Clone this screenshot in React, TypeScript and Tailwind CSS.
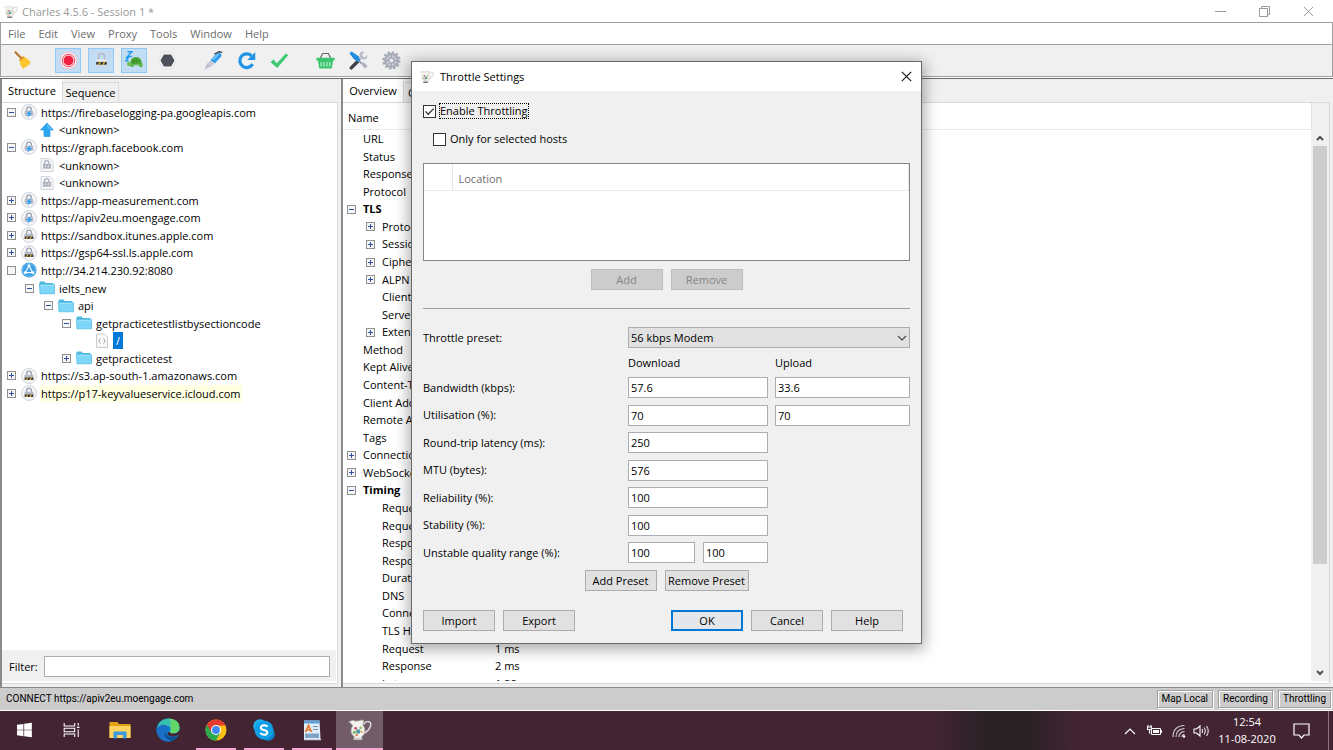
import { useState } from "react"
import type { ReactNode } from "react"
import clsx from "clsx"

const menus = ["File", "Edit", "View", "Proxy", "Tools", "Window", "Help"]

type TreeIcon = "bolt" | "lock" | "globe" | "up" | "doc" | "json" | "folder"

interface TreeRow {
  label: string
  depth: number
  icon: TreeIcon
  toggle?: "+" | "-" | "blank"
  selected?: boolean
  highlight?: boolean
}

const tree: TreeRow[] = [
  { label: "https://firebaselogging-pa.googleapis.com", depth: 0, icon: "bolt", toggle: "-" },
  { label: "<unknown>", depth: 1, icon: "up" },
  { label: "https://graph.facebook.com", depth: 0, icon: "bolt", toggle: "-" },
  { label: "<unknown>", depth: 1, icon: "doc" },
  { label: "<unknown>", depth: 1, icon: "doc" },
  { label: "https://app-measurement.com", depth: 0, icon: "bolt", toggle: "+" },
  { label: "https://apiv2eu.moengage.com", depth: 0, icon: "bolt", toggle: "+" },
  { label: "https://sandbox.itunes.apple.com", depth: 0, icon: "lock", toggle: "+" },
  { label: "https://gsp64-ssl.ls.apple.com", depth: 0, icon: "lock", toggle: "+" },
  { label: "http://34.214.230.92:8080", depth: 0, icon: "globe", toggle: "blank" },
  { label: "ielts_new", depth: 1, icon: "folder", toggle: "-" },
  { label: "api", depth: 2, icon: "folder", toggle: "-" },
  { label: "getpracticetestlistbysectioncode", depth: 3, icon: "folder", toggle: "-" },
  { label: "/", depth: 4, icon: "json", selected: true },
  { label: "getpracticetest", depth: 3, icon: "folder", toggle: "+" },
  { label: "https://s3.ap-south-1.amazonaws.com", depth: 0, icon: "lock", toggle: "+" },
  { label: "https://p17-keyvalueservice.icloud.com", depth: 0, icon: "lock", toggle: "+", highlight: true },
]

const indents = ["pl-1", "pl-[22px]", "pl-[41px]", "pl-[59px]", "pl-[77px]"]

interface DetailRow {
  name: string
  level: number
  toggle?: "+" | "-"
  bold?: boolean
  value?: string
}

const details: DetailRow[] = [
  { name: "URL", level: 0 },
  { name: "Status", level: 0 },
  { name: "Response Code", level: 0 },
  { name: "Protocol", level: 0 },
  { name: "TLS", level: 0, toggle: "-", bold: true },
  { name: "Protocol", level: 1, toggle: "+" },
  { name: "Session Resumed", level: 1, toggle: "+" },
  { name: "Cipher Suite", level: 1, toggle: "+" },
  { name: "ALPN", level: 1, toggle: "+" },
  { name: "Client Certificates", level: 1 },
  { name: "Server Certificates", level: 1 },
  { name: "Extensions", level: 1, toggle: "+" },
  { name: "Method", level: 0 },
  { name: "Kept Alive", level: 0 },
  { name: "Content-Type", level: 0 },
  { name: "Client Address", level: 0 },
  { name: "Remote Address", level: 0 },
  { name: "Tags", level: 0 },
  { name: "Connection", level: 0, toggle: "+" },
  { name: "WebSockets", level: 0, toggle: "+" },
  { name: "Timing", level: 0, toggle: "-", bold: true },
  { name: "Request Start Time", level: 1 },
  { name: "Request End Time", level: 1 },
  { name: "Response Start Time", level: 1 },
  { name: "Response End Time", level: 1 },
  { name: "Duration", level: 1 },
  { name: "DNS", level: 1 },
  { name: "Connect", level: 1 },
  { name: "TLS Handshake", level: 1 },
  { name: "Request", level: 1, value: "1 ms" },
  { name: "Response", level: 1, value: "2 ms" },
  { name: "Latency", level: 1, value: "1.38 s" },
]

const fields = [
  { id: "bandwidth", label: "Bandwidth (kbps):", down: "57.6", up: "33.6" },
  { id: "utilisation", label: "Utilisation (%):", down: "70", up: "70" },
  { id: "latency", label: "Round-trip latency (ms):", down: "250" },
  { id: "mtu", label: "MTU (bytes):", down: "576" },
  { id: "reliability", label: "Reliability (%):", down: "100" },
  { id: "stability", label: "Stability (%):", down: "100" },
]

function Expander({ state }: { state: "+" | "-" | "blank" }) {
  return (
    <svg width="9" height="9" viewBox="0 0 9 9" className="shrink-0">
      <rect x="0.5" y="0.5" width="8" height="8" fill="#f6f6f6" stroke="#8f8f8f" />
      {state !== "blank" && <path d="M2 4.5h5" stroke="#2f4f9f" />}
      {state === "+" && <path d="M4.5 2v5" stroke="#2f4f9f" />}
    </svg>
  )
}

function NodeIcon({ icon }: { icon: TreeIcon }) {
  if (icon === "bolt" || icon === "lock") {
    return (
      <svg width="16" height="16" viewBox="0 0 16 16" className="shrink-0">
        <circle cx="8" cy="8" r="7.4" fill="#f6f7f9" stroke="#cfd2da" />
        <path d="M5.6 7.4V5.6a2.4 2.4 0 0 1 4.8 0v1.800" fill="none" stroke="#9da2b0" strokeWidth="1.3" />
        {icon === "bolt" ? (
          <>
            <rect x="3.6" y="6.800" width="8.800" height="5.200" rx="1" fill="#b9bdca" />
            <path d="M9.600 6 5 10h2.400l-1.200 3.800L11.400 9H8.800z" fill="#2ea3f2" />
          </>
        ) : (
          <>
            <rect x="3.600" y="6.800" width="8.800" height="2.800" fill="#b4b9c7" />
            <rect x="3.600" y="9.400" width="8.800" height="2.600" fill="#3b3b3b" />
            <path d="m4.800 12 1.400-2.600h1.200L6 12zM8.400 12l1.400-2.600H11L9.600 12z" fill="#e8c22e" />
          </>
        )}
      </svg>
    )
  }
  if (icon === "globe") {
    return (
      <svg width="16" height="16" viewBox="0 0 16 16" className="shrink-0">
        <circle cx="8" cy="8" r="7.6" fill="#3b9fe3" />
        <circle cx="8" cy="8" r="6.4" fill="none" stroke="#8ccaf3" strokeWidth="0.7" />
        <path d="M8 3.6 4.3 10.6h7.4z" fill="none" stroke="#e9f6ff" strokeWidth="1.2" />
        <circle cx="8" cy="3.8" r="1.4" fill="#fff" />
        <circle cx="4.2" cy="10.6" r="1.4" fill="#fff" />
        <circle cx="11.8" cy="10.6" r="1.4" fill="#fff" />
      </svg>
    )
  }
  if (icon === "up") {
    return (
      <svg width="16" height="16" viewBox="0 0 14 16" className="shrink-0">
        <path d="m7 1 6.5 7H10v6.5H4V8H.5z" fill="#2ba6ef" stroke="#1f8fdd" strokeWidth="0.6" />
        <path d="m7 2 5 5.4H9.4L7 4.6z" fill="#55c4fa" />
      </svg>
    )
  }
  if (icon === "doc") {
    return (
      <svg width="16" height="16" viewBox="0 0 14 16" className="shrink-0">
        <path d="M1 1.5h9l3 3v10H1z" fill="#f4f5f7" stroke="#d4d6dc" />
        <path d="M4.6 7V5.8a2.1 2.1 0 0 1 4.2 0V7" fill="none" stroke="#a9adb9" strokeWidth="1.2" />
        <path d="M3 6.800h8v4.800H3z" fill="#a6abb8" />
        <path d="M3 9.2h8M5.600 7v4.400M8.400 7v4.400" stroke="#cfd2da" strokeWidth="0.8" />
      </svg>
    )
  }
  if (icon === "json") {
    return (
      <svg width="16" height="16" viewBox="0 0 14 16" className="shrink-0">
        <path d="M1.5 1h8l3 3v10.5h-11z" fill="#fafafa" stroke="#c9c9ce" />
        <path d="M5.6 5.4Q4.6 5.4 4.6 7t-1 1q1 0 1 1.2t1 1.4M8.4 5.4q1 0 1 1.6t1 1q-1 0-1 1.2t-1 1.4" fill="none" stroke="#a2a2aa" strokeWidth="0.8" />
      </svg>
    )
  }
  return (
    <svg width="16" height="16" viewBox="0 0 16 16" className="shrink-0">
      <path d="M.4 3q0-1.600 1.200-1.600h3.800L6.800 3h7.600v3h-14z" fill="#4db8e0" />
      <path d="M.5 4.600h15v9.200H1z" fill="#7ed6f8" stroke="#4db8e0" strokeWidth="0.7" />
      <path d="M1.200 5.300h13.600" stroke="#b5eafd" strokeWidth="0.8" />
    </svg>
  )
}

function Jug({ size, faded }: { size: number; faded?: boolean }) {
  return (
    <svg width={size} height={size} viewBox="0 0 22 22" className={clsx("shrink-0", faded && "opacity-90")}>
      <path d="M14.400 6q1-3 4.600-2.600 2.600.6 1.600 4-1.400 4.400-6 6.600" fill="none" stroke={faded ? "#c4c4c4" : "#e2dfdc"} strokeWidth="1.3" />
      <path
        d="M1 3.400 4.400 2.200 7 3l3.600-.4 2.400-.8 1.400.8-.8 4q2.200 2.400 1.800 5.800-.6 3.400-3 4.800l.6 2.400H5.200l.6-2.400Q3 15.400 2.800 12q0-3 1.800-5Q3 5.400 1 3.400z"
        fill="#f4f3ef"
        stroke="#b5b5b0"
        strokeWidth="0.800"
      />
      <circle cx="7" cy="9.400" r="1.400" fill="#c85b72" />
      <circle cx="9.400" cy="12.400" r="2" fill="#4f9aa8" />
      <circle cx="5.800" cy="13" r="1.400" fill="#7cb65b" />
      <circle cx="11.600" cy="9" r="1.300" fill="#8fc46c" />
      <circle cx="8" cy="15.600" r="1.100" fill="#d77b4a" />
      <circle cx="12.600" cy="12.600" r="1" fill="#e0a040" />
      <path d="M5.400 19.200h7" stroke={faded ? "#5a5a5a" : "#c9c6c2"} strokeWidth="2" />
    </svg>
  )
}

const toolIcons: Record<string, ReactNode> = {
  Clear: (
    <>
      <path d="M2.6 1.4 9 8" stroke="#b8742a" strokeWidth="2.2" strokeLinecap="round" />
      <path d="M7 8.600 11 5.600q5 2.400 8 6.800l-1.800.8-.2 1.800-2 .2-.8 1.800-1.800-.2-1 2.400Q6.600 15 7 8.600z" fill="#fbc62f" />
      <path d="m6.6 8.8 4.2-3.2 1 1.2-4.4 3.6z" fill="#e48d20" />
    </>
  ),
  Record: (
    <>
      <circle cx="10" cy="10" r="8.8" fill="#fdf2f4" stroke="#f1b8c1" strokeWidth="0.8" />
      <circle cx="10" cy="10" r="6.600" fill="#fff" stroke="#e8384f" strokeWidth="1" />
      <circle cx="10" cy="10" r="5.200" fill="#ee1f3f" />
    </>
  ),
  "SSL Proxying": (
    <>
      <path d="M6.8 9.4V6a3.2 3.2 0 0 1 6.4 0v3.4" fill="none" stroke="#b9bec9" strokeWidth="2" />
      <rect x="4.4" y="9" width="11.2" height="7" fill="#eeeef0" />
      <rect x="4.4" y="11.4" width="11.2" height="3" fill="#34373c" />
      <path d="m6 14.4 2-3h1.6l-2 3zM10.6 14.4l2-3h1.6l-2 3z" fill="#eac231" />
      <path d="M4.4 15.6h11.2" stroke="#c9ccd3" />
    </>
  ),
  Throttle: (
    <>
      <path d="M2.600.8h4.600L2.800 5.600h4.600M.6 7h3L.8 10.400h3" fill="none" stroke="#1b9de8" strokeWidth="1.400" />
      <path d="M5.400 14Q6 6.400 11.600 6.400T18 14z" fill="#4aa636" />
      <path d="M8.6 13 9.8 8m3 5-.6-5M6.6 10.6h10.2" stroke="#378a27" strokeWidth="0.8" />
      <circle cx="4.400" cy="13.600" r="2.400" fill="#6fc253" />
      <path d="M5 14h14l-1 2.800h-2.600L14.400 15H9.600l-.8 1.800H6.4z" fill="#58b340" />
    </>
  ),
  Breakpoints: (
    <>
      <path d="M5.4 1.4h9.2l5 8.600-5 8.600H5.4L.4 10z" fill="#f9f9fa" stroke="#dadbde" strokeWidth="0.8" />
      <path d="M6.200 3.600h7.600l3.600 6.400-3.600 6.400H6.200L2.600 10z" fill="#4d5159" />
    </>
  ),
  Compose: (
    <>
      <path d="m.6 19.400 2.800-6.400L7.400 16z" fill="#b5bac6" />
      <path d="M3.2 13.6 8 8.2l4 3.6L6.8 17z" fill="#c7cbd6" />
      <path d="m7 9.4 7-7.2q3.6-1.6 4.6 3l-7 7.6z" fill="#2b9cee" />
      <path d="M10.600 3.400 16 .8l3 .6" fill="none" stroke="#35383f" strokeWidth="1.4" />
      <path d="m9.4 9.2 6-6" stroke="#8fd2fb" strokeWidth="1.2" />
    </>
  ),
  Repeat: (
    <>
      <path d="M16.400 13.800A7.200 7.200 0 1 1 15.200 5" fill="none" stroke="#2294e8" strokeWidth="3.4" />
      <path d="M19.200 1v8.400h-8.400z" fill="#2294e8" />
    </>
  ),
  Validate: <path d="m.6 11.800 3-2.800 3.600 3.800L16.600 2.600l2.600 2L7.600 18z" fill="#40c973" />,
  Basket: (
    <>
      <path d="M4.4 8 7 2.600h6L15.600 8" fill="none" stroke="#62666e" strokeWidth="1.2" />
      <path d="M.4 7.200h19.200v2.800h-1.600L16.600 18.400H3.400L2 10H.4z" fill="#3cc56f" />
      <path d="M5.4 11.6v4.6M8.4 11.6v4.6M11.6 11.6v4.6M14.6 11.6v4.6" stroke="#c9f3d8" strokeWidth="1.1" />
    </>
  ),
  Tools: (
    <>
      <path d="m2.400 17.800 7-7" stroke="#3f434b" strokeWidth="3.6" strokeLinecap="round" />
      <path d="m9 10.8 5-5" stroke="#c3c7d1" strokeWidth="2.6" />
      <path d="M19.200 4.2 16.200 6.800 13.600 4.400 16.200.8q-5-1.400-5.200 4 1.200 5 5.200 4 3.600-.8 3-4.600z" fill="#b9bdc8" />
      <path d="m.4 2.400 2.400-2L10 5.600l2 4.200-2.400 1.800L5 8.400z" fill="#218de0" />
      <path d="m10.4 10.4 3 3" stroke="#8a8f9b" strokeWidth="1.6" />
      <path d="m12.600 13.400 4.200 5 2.800-2.600-4.600-4.200z" fill="#adb1bd" />
    </>
  ),
  Settings: (
    <>
      <circle cx="10" cy="10" r="8.6" fill="none" stroke="#a4a8b4" strokeWidth="2" strokeDasharray="2.7 1.8" />
      <circle cx="10" cy="10" r="6.8" fill="#c6c9d3" stroke="#a4a8b4" strokeWidth="2" />
      <path d="M10 4v12M4 10h12M5.8 5.8l8.4 8.4M14.2 5.8l-8.4 8.4" stroke="#9599a6" strokeWidth="0.9" />
      <circle cx="10" cy="10" r="2.6" fill="#eeeeef" stroke="#9599a6" />
    </>
  ),
}

const toolGroups = [
  [{ name: "Clear" }],
  [
    { name: "Record", on: true },
    { name: "SSL Proxying", on: true },
    { name: "Throttle", on: true },
    { name: "Breakpoints" },
  ],
  [{ name: "Compose" }, { name: "Repeat" }, { name: "Validate" }],
  [{ name: "Basket" }, { name: "Tools" }, { name: "Settings" }],
]

function PushButton({ children, className, disabled }: { children: ReactNode; className?: string; disabled?: boolean }) {
  return (
    <button
      type="button"
      disabled={disabled}
      className={clsx(
        "h-[21px] border text-center leading-4",
        disabled ? "border-[#bfbfbf] bg-[#cccccc] text-[#858585]" : "border-[#adadad] bg-[#e1e1e1] text-black",
        className ?? "w-[72px]",
      )}
    >
      {children}
    </button>
  )
}

function TextField({ id, label, value, className }: { id: string; label: string; value: string; className: string }) {
  return (
    <input
      id={id}
      aria-label={label}
      defaultValue={value}
      className={clsx("h-[21px] border border-[#abadb3] bg-white px-[2px] leading-4 outline-none", className)}
    />
  )
}

function CheckBox({ id, checked, onChange }: { id: string; checked: boolean; onChange: (v: boolean) => void }) {
  return (
    <span className="relative flex h-[13px] w-[13px]">
      <input
        id={id}
        type="checkbox"
        checked={checked}
        onChange={(e) => onChange(e.target.checked)}
        className="h-[13px] w-[13px] appearance-none border border-[#333333] bg-white"
      />
      {checked && (
        <svg viewBox="0 0 13 13" className="pointer-events-none absolute inset-0">
          <path d="m2.4 6.4 2.8 2.8 5.4-5.6" fill="none" stroke="#333" strokeWidth="1.3" />
        </svg>
      )}
    </span>
  )
}

function ThrottleDialog() {
  const [enabled, setEnabled] = useState(true)
  const [selectedOnly, setSelectedOnly] = useState(false)

  return (
    <section
      role="dialog"
      aria-label="Throttle Settings"
      className="absolute inset-x-0 top-[61px] z-20 mx-auto w-[511px] border border-[#6b6b6b] bg-[#f0f0f0] shadow-[0_3px_14px_2px_rgba(0,0,0,0.35)]"
    >
      <header className="flex h-[29px] items-center bg-white pl-2 pr-[9px]">
        <Jug size={14} faded />
        <h2 className="flex-1 pl-[6px]">Throttle Settings</h2>
        <button type="button" aria-label="Close">
          <svg width="11" height="11" viewBox="0 0 11 11">
            <path d="m.8.8 9.4 9.4M10.2.8.8 10.2" stroke="#111" strokeWidth="1.1" />
          </svg>
        </button>
      </header>

      <div className="px-[11px] pb-3 pt-3">
        <div className="flex h-4 items-center gap-[3px]">
          <CheckBox id="enable" checked={enabled} onChange={setEnabled} />
          <label htmlFor="enable" className="border border-dotted border-black leading-[14px]">
            Enable Throttling
          </label>
        </div>
        <div className="mt-3 flex h-4 items-center gap-1 pl-[10px]">
          <CheckBox id="hosts" checked={selectedOnly} onChange={setSelectedOnly} />
          <label htmlFor="hosts">Only for selected hosts</label>
        </div>

        <div className="mt-4 h-[98px] border border-[#828790] bg-white">
          <table className="w-full border-collapse">
            <thead>
              <tr className="h-[26px] border-b border-[#ececec] text-left text-[#6d6d6d]">
                <th aria-label="Enabled" className="w-7 border-r border-[#e5e5e5]" />
                <th className="border-r border-[#e5e5e5] pl-[6px] pt-1 font-normal">Location</th>
              </tr>
            </thead>
          </table>
        </div>
        <div className="mt-2 flex justify-center gap-2">
          <PushButton disabled>Add</PushButton>
          <PushButton disabled>Remove</PushButton>
        </div>

        <hr className="mt-[18px] border-t border-[#a0a0a0]" />

        <div className="mt-[18px] flex items-center">
          <label htmlFor="preset" className="w-[205px]">
            Throttle preset:
          </label>
          <div className="relative flex-1">
            <select
              id="preset"
              defaultValue="56"
              className="block h-[21px] w-full appearance-none border border-[#adadad] bg-[#e1e1e1] px-[2px] leading-4"
            >
              <option value="56">56 kbps Modem</option>
              <option value="256">256 kbps ISDN/DSL</option>
            </select>
            <svg width="10" height="6" viewBox="0 0 10 6" className="pointer-events-none absolute right-[3px] top-2">
              <path d="m1 1 4 4 4-4" fill="none" stroke="#444" strokeWidth="1.1" />
            </svg>
          </div>
        </div>

        <div className="mt-1 grid auto-rows-[27px_28px] grid-cols-[205px_140px_1fr] grid-rows-[22px] items-center">
          <span className="col-start-2">Download</span>
          <span className="pl-[7px]">Upload</span>
          {fields.map((field) => (
            <div key={field.id} className="contents">
              <label htmlFor={field.id} className="col-start-1">
                {field.label}
              </label>
              <TextField id={field.id} label={field.label} value={field.down} className="w-full" />
              {field.up && (
                <div className="flex pl-[7px]">
                  <TextField id={`${field.id}-up`} label={`${field.label} upload`} value={field.up} className="w-full" />
                </div>
              )}
            </div>
          ))}
          <label htmlFor="range-low" className="col-start-1">
            Unstable quality range (%):
          </label>
          <div className="flex justify-between">
            <TextField id="range-low" label="Range from" value="100" className="w-[67px]" />
            <TextField id="range-high" label="Range to" value="100" className="w-[65px]" />
          </div>
        </div>

        <div className="mt-1 flex justify-center gap-2">
          <PushButton>Add Preset</PushButton>
          <PushButton className="w-[84px]">Remove Preset</PushButton>
        </div>

        <footer className="mt-[19px] flex gap-2 pr-[7px]">
          <PushButton>Import</PushButton>
          <PushButton>Export</PushButton>
          <div className="flex flex-1 justify-end gap-2">
            <button type="button" className="h-[21px] w-[72px] border-2 border-[#0078d7] bg-[#e3e6ea] leading-4">
              OK
            </button>
            <PushButton>Cancel</PushButton>
            <PushButton>Help</PushButton>
          </div>
        </footer>
      </div>
    </section>
  )
}

function StructurePane() {
  return (
    <div className="flex w-[341px] shrink-0 flex-col border-l-2 border-[#8a8a8a] bg-[#f0f0f0] pr-[3px] pb-[3px]">
      <div role="tablist" className="flex h-[23px] items-end">
        <button role="tab" className="z-10 h-full w-[60px] bg-white pt-px text-center">
          Structure
        </button>
        <button role="tab" className="h-5 w-[57px] border border-b-0 border-[#d9d9d9] pt-px text-center">
          Sequence
        </button>
      </div>
      <div className="flex min-h-0 flex-1 flex-col border border-l-0 border-[#d9d9d9] bg-white pb-[2px] pr-px">
        <ul className="grid flex-1 auto-rows-[18px_17px_18px_18px_17px_18px_17px] content-start">
          {tree.map((row, i) => (
            <li key={i} className={clsx("flex items-center", indents[row.depth])}>
              <span className="flex w-[15px] shrink-0 pl-[1px]">{row.toggle && <Expander state={row.toggle} />}</span>
              <NodeIcon icon={row.icon} />
              <span
                className={clsx(
                  "ml-[3px] whitespace-nowrap leading-[17px]",
                  row.selected ? "bg-[#0078d7] px-[3px] text-white" : "px-px",
                  row.highlight && "bg-[#ffffe1]",
                )}
              >
                {row.label}
              </span>
            </li>
          ))}
        </ul>
        <div className="flex h-[31px] items-center gap-[6px] bg-[#f0f0f0] pl-[7px] pr-[6px] pt-[2px]">
          <label htmlFor="filter">Filter:</label>
          <input id="filter" className="h-[21px] min-w-0 flex-1 border border-[#abadb3] bg-white px-1 outline-none" />
        </div>
      </div>
    </div>
  )
}

function OverviewPane() {
  return (
    <div className="flex min-w-0 flex-1 flex-col border-l-2 border-[#8a8a8a] bg-[#f0f0f0] pb-[3px] pr-[3px]">
      <div role="tablist" className="flex h-[23px] items-end">
        <button role="tab" className="h-full w-[60px] bg-white pt-px text-center">
          Overview
        </button>
        <button role="tab" className="h-5 border border-b-0 border-[#d9d9d9] px-1 pt-px text-center">
          Contents
        </button>
      </div>
      <div className="flex min-h-0 flex-1 flex-col border border-l-0 border-[#d9d9d9] bg-white pb-[2px]">
        <div className="flex min-h-0 flex-1">
          <div className="min-w-0 flex-1 overflow-hidden">
            <table className="block w-full">
              <thead className="block">
                <tr className="flex h-[27px] items-center border-b border-[#ececec] text-left">
                  <th className="w-[147px] pl-[5px] pt-1 font-normal">Name</th>
                  <th aria-label="Value" className="flex-1" />
                </tr>
              </thead>
              <tbody className="grid auto-rows-[18px_17px_18px_17px_18px_17px_18px]">
                {details.map((row, i) => (
                  <tr key={i} className="flex items-center">
                    <td
                      className={clsx(
                        "flex w-[152px] items-center overflow-hidden whitespace-nowrap",
                        row.level === 0 ? "pl-1" : "pl-[23px]",
                        row.bold && "font-bold",
                      )}
                    >
                      <span className="flex w-4 shrink-0">{row.toggle && <Expander state={row.toggle} />}</span>
                      {row.name}
                    </td>
                    <td>{row.value}</td>
                  </tr>
                ))}
              </tbody>
            </table>
          </div>
          <div className="flex w-[18px] flex-col bg-[#f0f0f0]">
            <div className="h-[27px] border-l border-[#e0e0e0]" />
            <svg viewBox="0 0 14 16" className="h-4 w-full">
              <path d="m4 10 3-3 3 3" fill="none" stroke="#505050" strokeWidth="2" />
            </svg>
            <div className="mx-auto w-[14px] flex-[416] bg-[#cdcdcd]" />
            <div className="flex-[101]" />
            <svg viewBox="0 0 14 16" className="h-4 w-full">
              <path d="m4 6 3 3 3-3" fill="none" stroke="#505050" strokeWidth="2" />
            </svg>
          </div>
        </div>
      </div>
    </div>
  )
}

const apps = [
  {
    name: "Start",
    icon: <path d="M3.400 6 10.800 5v6.600H3.400zM11.600 4.900 20.400 3.600v8h-8.800zM3.400 12.400h7.400V19L3.400 18zM11.600 12.400h8.800v8l-8.800-1.300z" fill="#fff" />,
  },
  {
    name: "Task View",
    icon: (
      <path d="M2.500 4v3.500h12V4M2.500 20v-3.500h12V20M2.500 10h12v4h-12zM18.500 4v3M18.500 11v9M17 9h3" fill="none" stroke="#fff" strokeWidth="1.200" />
    ),
  },
  {
    name: "File Explorer",
    icon: (
      <>
        <path d="M1.500 4h8l1.500 2h11.500v14h-21z" fill="#e2a012" />
        <path d="M1.500 8h21v12h-21z" fill="#fcd462" />
        <path d="M5.500 20.500v-7h13v7H15v-3.500H9v3.500z" fill="#3b9ade" />
      </>
    ),
  },
  {
    name: "Edge",
    icon: (
      <>
        <circle cx="12" cy="12" r="11.500" fill="#1277c9" />
        <path d="M.8 10.500Q3 .8 12.500.5 23 1 23.500 9.500q0 5-5.500 6-4 .3-4.500-1.600 1.800-2 .4-4.600Q10.500 5.500.8 10.500z" fill="#38c1b0" />
        <path d="M12.500.5Q23 1 23.500 9.500q0 5-5.500 6-4 .3-4.500-1.600 3-2.500.8-5.400Q16 4 12.500.5z" fill="#62d66b" />
        <path d="M.6 11Q3.500 6 9.500 7q3.500.8 4.600 3.500-4.600-1.500-5.400 3-.5 7 8 9Q9 25 4 20 .3 16.500.6 11z" fill="#1b6fc4" />
        <path d="M8.600 13.500q1.600 6 8.400 5.800 3.500-.3 5.400-1.600-2 3.800-6 5.200-8.600-1.400-7.800-9.400z" fill="#0c4f95" />
        <path d="M13.500 13.900q1 2 4.500 1.700 3-.3 5.500-3.100l-.5 4q-6 4-11 .5-2-3 1.500-3.100z" fill="#432433" />
      </>
    ),
  },
  {
    name: "Chrome",
    running: true,
    icon: (
      <>
        <circle cx="12" cy="12" r="10.500" fill="#fbc116" />
        <path d="M12 12 2.900 6.750A10.500 10.500 0 0 1 21.100 6.750L21.500 7.500H12z" fill="#e33b2e" />
        <path d="M2.900 6.750A10.500 10.500 0 0 0 12 22.500l4.500-8-4.500-2.500z" fill="#2da94f" />
        <path d="M7.500 14.600 2.900 6.750 12 7z" fill="#e33b2e" />
        <circle cx="12" cy="12" r="5" fill="#fff" />
        <circle cx="12" cy="12" r="3.900" fill="#4285f4" />
      </>
    ),
  },
  {
    name: "Skype",
    running: true,
    icon: (
      <>
        <circle cx="8" cy="8" r="6.800" fill="#1fb0f0" />
        <circle cx="16" cy="16" r="6.800" fill="#0a84cf" />
        <circle cx="12" cy="12" r="9.400" fill="#0f9fe4" />
        <path d="M15.500 8.800Q14.600 7.200 12 7.200T8.800 9.400q0 1.800 3.200 2.500t3.300 2.700q-.2 2.200-3.200 2.200-2.800 0-3.700-1.900" fill="none" stroke="#fff" strokeWidth="2" />
      </>
    ),
  },
  {
    name: "WordPad",
    running: true,
    icon: (
      <>
        <path d="M4 2.500h15.500L20.500 21H4z" fill="#dfeefb" />
        <path d="M4 2.500h15.500v3H4z" fill="#5f9fd8" />
        <path d="m5.500 14 3-6.500 3 6.500M7 12h3.500" fill="none" stroke="#e5762a" strokeWidth="1.700" />
        <path d="M13 8.500h5M13 11.500h5" stroke="#7d8fa5" />
        <path d="M5 15.500h14V20H5z" fill="#7fa4c7" />
        <path d="M4 21.500h17" stroke="#c9d8e6" strokeWidth="1.500" />
      </>
    ),
  },
]

function Taskbar() {
  return (
    <footer className="flex h-[39px] shrink-0 bg-[#432433] bg-[linear-gradient(90deg,#432433_70%,#2a2125_74%,#2a2125_77%,#432433_81%)] text-white">
      {apps.map((app) => (
        <button key={app.name} type="button" aria-label={app.name} className="flex w-12 flex-col items-center">
          <span className="flex flex-1 items-center pt-px">
            <svg width={app.name === "Start" || app.name === "Task View" ? 21 : 24} height="24" viewBox="0 0 24 24">
              {app.icon}
            </svg>
          </span>
          <span className={clsx("h-[2px] w-10", app.running && "bg-[#f9a8d4]")} />
        </button>
      ))}
      <button type="button" aria-label="Charles" className="flex w-[47px] flex-col items-center bg-[#725c68]">
        <span className="flex flex-1 items-center">
          <Jug size={24} />
        </span>
        <span className="h-[2px] w-full bg-[#f9a8d4]" />
      </button>

      <div className="ml-auto flex items-center">
        <svg width="12" height="8" viewBox="0 0 12 8" className="mr-[10px]">
          <path d="m1 7 5-5 5 5" fill="none" stroke="#fff" strokeWidth="1.200" />
        </svg>
        <svg width="16" height="12" viewBox="0 0 16 12" className="mr-[10px]">
          <path d="M1 2h5M2 0v2M5 0v2M1.500 2v2.500h4V2M3.500 4v4h1" fill="none" stroke="#fff" strokeWidth="1.100" />
          <path d="M5.500 3.500h9v6h-9z" fill="none" stroke="#fff" />
          <path d="M7 5h6v3H7z" fill="#fff" />
          <path d="M15.500 5v3" stroke="#fff" />
        </svg>
        <svg width="14" height="14" viewBox="0 0 14 14" className="mr-[7px]">
          <path d="M1 13Q1 2 12.500 1.500M4 13q0-8 8.500-8.500M7 13q0-5 5.500-5.500M10 13q0-2.500 2.500-2.500" fill="none" stroke="#d9d0d4" strokeWidth="1.100" />
          <circle cx="12" cy="12.500" r="1.200" fill="#fff" />
        </svg>
        <svg width="17" height="14" viewBox="0 0 17 14" className="mr-[7px]">
          <path d="M1 5h2.500L7 2v10L3.500 9H1z" fill="none" stroke="#fff" strokeWidth="1.100" />
          <path d="M9 5q1.300 2 0 4M11.300 3.500q2.300 3.500 0 7M13.600 2q3.200 5 0 10" fill="none" stroke="#fff" />
        </svg>
        <div className="w-[60px] pb-px text-center leading-[17px]">
          <div>12:54</div>
          <div>11-08-2020</div>
        </div>
        <svg width="17" height="17" viewBox="0 0 17 17" className="ml-4 mr-[18px]">
          <path d="M1 2h15v11h-5l-2.500 3L6 13H1z" fill="none" stroke="#fff" strokeWidth="1.200" />
        </svg>
        <span className="mr-1 h-full w-px self-stretch bg-[#8a7580]" />
      </div>
    </footer>
  )
}

export default function App() {
  return (
    <div className="relative flex h-screen flex-col overflow-hidden bg-white font-['Open_Sans',sans-serif] text-[11px] leading-4 text-black">
      <header className="flex h-[22px] shrink-0 items-center pl-1 pt-px text-[#999999]">
        <Jug size={14} faded />
        <h1 className="flex-1 pl-1">Charles 4.5.6 - Session 1 *</h1>
        <div className="flex items-center gap-[33px] pr-[19px]">
          <button type="button" aria-label="Minimize">
            <svg width="11" height="11" viewBox="0 0 11 11">
              <path d="M0 5.500h11" stroke="#999" />
            </svg>
          </button>
          <button type="button" aria-label="Restore">
            <svg width="11" height="11" viewBox="0 0 11 11" fill="none" stroke="#999">
              <path d="M.5 2.500h8v8h-8zM2.500 2.500v-2h8v8h-2" />
            </svg>
          </button>
          <button type="button" aria-label="Close">
            <svg width="11" height="11" viewBox="0 0 11 11">
              <path d="m1 1 9 9M10 1l-9 9" stroke="#999" />
            </svg>
          </button>
        </div>
      </header>

      <nav className="flex h-[23px] shrink-0 items-center gap-[13px] border border-[#a0a0a0] pl-[7px] pt-px text-[#6d6d6d]">
        {menus.map((menu) => (
          <button key={menu} type="button">
            {menu}
          </button>
        ))}
      </nav>

      <div className="flex h-8 shrink-0 items-center gap-5 border border-t-0 border-[#a0a0a0] bg-[#f0f0f0] pl-2">
        {toolGroups.map((group, i) => (
          <div key={i} className="flex gap-[7px]">
            {group.map((tool: { name: string; on?: boolean }) => (
              <button
                key={tool.name}
                type="button"
                aria-label={tool.name}
                className={clsx(
                  "flex h-[25px] w-[26px] items-center justify-center border",
                  tool.on ? "border-[#90c8f6] bg-[#c2dcf3]" : "border-transparent",
                )}
              >
                <svg width="19" height="19" viewBox="0 0 20 20">
                  {toolIcons[tool.name]}
                </svg>
              </button>
            ))}
          </div>
        ))}
      </div>

      <main className="mt-px flex min-h-0 flex-1 border-t border-[#696969]">
        <StructurePane />
        <OverviewPane />
      </main>

      <div className="flex h-6 shrink-0 items-center gap-[5px] border-b border-t border-b-white border-t-[#8a8a8a] bg-[#cccccc] pl-[6px] pr-[2px] font-[Roboto,sans-serif] text-[10px]">
        <span className="flex-1">CONNECT https://apiv2eu.moengage.com</span>
        {["Map Local", "Recording", "Throttling"].map((label) => (
          <span key={label} className="border border-[#a0a0a0] px-1 shadow-[inset_1px_1px_0_#fff,1px_1px_0_#fff]">
            {label}
          </span>
        ))}
      </div>

      <Taskbar />

      <ThrottleDialog />
    </div>
  )
}
